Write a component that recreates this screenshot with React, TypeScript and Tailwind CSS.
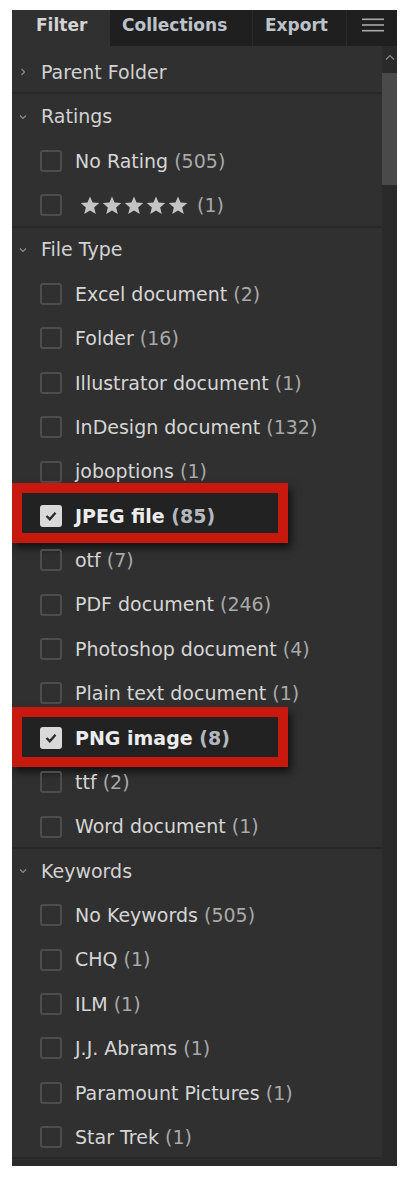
import React from "react";

type Item = {
  label: string;
  count: number;
  checked?: boolean;
  stars?: boolean;
  boxTop?: string;
};

type Section = {
  title: string;
  open: boolean;
  items: Item[];
};

const sections: Section[] = [
  { title: "Parent Folder", open: false, items: [] },
  {
    title: "Ratings",
    open: true,
    items: [
      { label: "No Rating", count: 505 },
      { label: "", count: 1, stars: true },
    ],
  },
  {
    title: "File Type",
    open: true,
    items: [
      { label: "Excel document", count: 2 },
      { label: "Folder", count: 16 },
      { label: "Illustrator document", count: 1 },
      { label: "InDesign document", count: 132 },
      { label: "joboptions", count: 1 },
      { label: "JPEG file", count: 85, checked: true, boxTop: "top-[-11px]" },
      { label: "otf", count: 7 },
      { label: "PDF document", count: 246 },
      { label: "Photoshop document", count: 4 },
      { label: "Plain text document", count: 1 },
      { label: "PNG image", count: 8, checked: true, boxTop: "top-[-9px]" },
      { label: "ttf", count: 2 },
      { label: "Word document", count: 1 },
    ],
  },
  {
    title: "Keywords",
    open: true,
    items: [
      { label: "No Keywords", count: 505 },
      { label: "CHQ", count: 1 },
      { label: "ILM", count: 1 },
      { label: "J.J. Abrams", count: 1 },
      { label: "Paramount Pictures", count: 1 },
      { label: "Star Trek", count: 1 },
    ],
  },
];

function Chevron({ open }: { open: boolean }) {
  return (
    <svg width="10" height="10" viewBox="0 0 10 10" className="shrink-0">
      {open ? (
        <polyline points="2,3.5 5,6.5 8,3.5" fill="none" stroke="#8c8c8c" strokeWidth="1.2" />
      ) : (
        <polyline points="3.5,2 6.5,5 3.5,8" fill="none" stroke="#8c8c8c" strokeWidth="1.2" />
      )}
    </svg>
  );
}

function Star() {
  return (
    <svg width="20" height="19" viewBox="0 0 24 23">
      <polygon
        points="12,0.5 15.1,8 23.2,8.6 17,13.8 19,21.8 12,17.5 5,21.8 7,13.8 0.8,8.6 8.9,8"
        fill="#c4c4c4"
      />
    </svg>
  );
}

function Checkbox({ checked }: { checked?: boolean }) {
  if (checked) {
    return (
      <div className="w-[22px] h-[22px] rounded-[3px] bg-[#d9d9d9] flex items-center justify-center shrink-0">
        <svg width="14" height="14" viewBox="0 0 14 14">
          <polyline points="2.5,7 5.8,10.2 11.5,3.8" fill="none" stroke="#2a2a2a" strokeWidth="2.4" />
        </svg>
      </div>
    );
  }
  return <div className="w-[22px] h-[22px] rounded-[3px] border-2 border-[#4d4d4d] shrink-0" />;
}

function Row({ item }: { item: Item }) {
  return (
    <div className="relative h-[44.375px] flex items-center pl-[28px]">
      {item.checked && (
        <div
          className={`absolute left-0 ${item.boxTop} w-[276px] h-[60px] border-[10px] border-[#c8190f] bg-[#222222] shadow-[3px_5px_8px_rgba(0,0,0,0.65)]`}
        />
      )}
      <div className="relative flex items-center">
        <Checkbox checked={item.checked} />
        {item.stars ? (
          <div className="flex items-center ml-[18px]">
            <div className="flex gap-[2px]">
              <Star />
              <Star />
              <Star />
              <Star />
              <Star />
            </div>
            <span className="ml-[9px] text-[#a9a9a9]">({item.count})</span>
          </div>
        ) : (
          <span className={`ml-[13px] ${item.checked ? "font-bold text-[#ececec]" : "text-[#d6d6d6]"}`}>
            {item.label}{" "}
            <span className={item.checked ? "text-[#b3b8bf]" : "text-[#a9a9a9]"}>({item.count})</span>
          </span>
        )}
      </div>
    </div>
  );
}

export default function App() {
  return (
    <div
      className="w-[410px] h-[1180px] bg-white pt-[10px] pl-[12px]"
      style={{ fontFamily: '"DejaVu Sans", Verdana, sans-serif' }}
    >
      <div className="w-[385px] h-[1156px] bg-[#303030] flex flex-col overflow-hidden">
        {/* tabs */}
        <div className="h-[36px] bg-[#1f1f1f] flex items-stretch text-[17px] font-bold shrink-0">
          <div className="w-[98px] bg-[#303030] flex items-center pl-[24px] pb-[5px] text-[#d4d4d4]">Filter</div>
          <div className="w-[143px] flex items-center pl-[12px] pb-[5px] text-[#bcc3cb] border-r border-[#2a2a2a]">
            Collections
          </div>
          <div className="w-[94px] flex items-center pl-[12px] pb-[5px] text-[#bcc3cb] border-r border-[#2a2a2a]">
            Export
          </div>
          <div className="flex-1 flex items-center justify-center pl-[2px] pb-[6px]">
            <svg width="22" height="14" viewBox="0 0 22 14">
              <rect x="0" y="0.5" width="22" height="1.6" fill="#a8a8a8" />
              <rect x="0" y="6.2" width="22" height="1.6" fill="#a8a8a8" />
              <rect x="0" y="11.9" width="22" height="1.6" fill="#a8a8a8" />
            </svg>
          </div>
        </div>

        <div className="flex flex-1 min-h-0">
          {/* list */}
          <div className="flex-1 pt-[4px] text-[19px]">
            {sections.map((s) => (
              <div key={s.title} className="shadow-[inset_0_-2px_0_#282828]">
                <div className="h-[44.375px] flex items-center pl-[6px] gap-[13px] text-[#d2d2d2]">
                  <Chevron open={s.open} />
                  <span>{s.title}</span>
                </div>
                {s.items.map((it, i) => (
                  <Row key={i} item={it} />
                ))}
              </div>
            ))}
          </div>

          {/* scrollbar */}
          <div className="w-[15px] bg-[#2a2a2a] flex flex-col shrink-0">
            <div className="h-[27px] flex justify-center pt-[8px]">
              <svg width="10" height="7" viewBox="0 0 10 7">
                <polyline points="1,5.5 5,1.5 9,5.5" fill="none" stroke="#8a8a8a" strokeWidth="1.2" />
              </svg>
            </div>
            <div className="h-[112px] bg-[#4a4a4a]" />
          </div>
        </div>
        <div className="h-[6px] bg-[#2a2a2a] shrink-0" />
      </div>
    </div>
  );
}
